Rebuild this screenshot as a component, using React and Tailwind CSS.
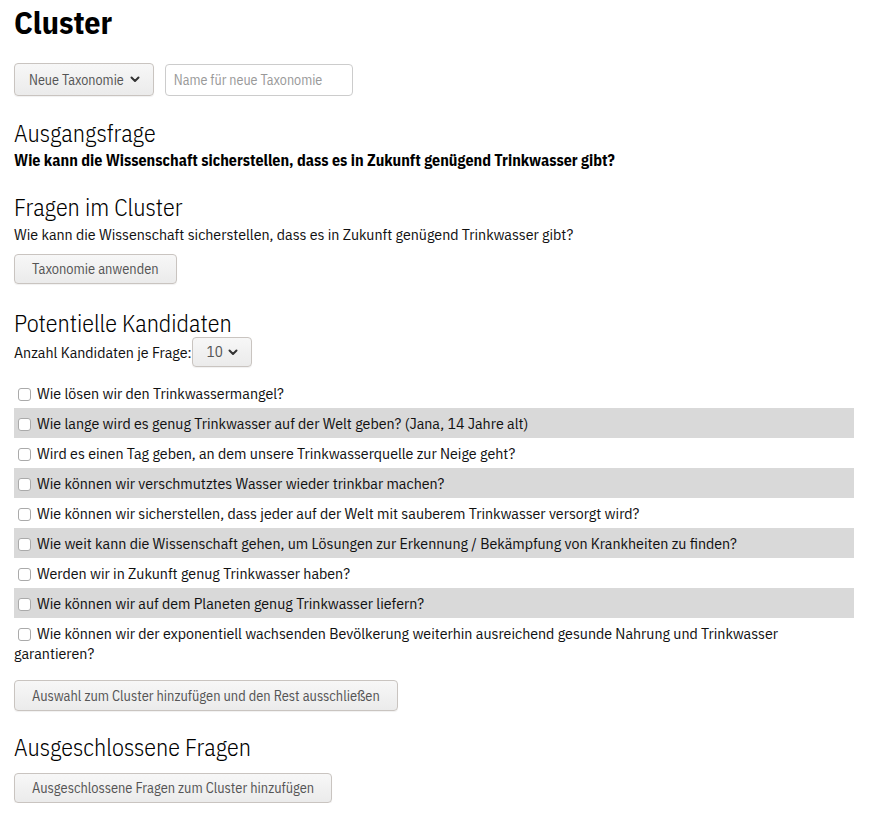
const questions = [
  "Wie lösen wir den Trinkwassermangel?",
  "Wie lange wird es genug Trinkwasser auf der Welt geben? (Jana, 14 Jahre alt)",
  "Wird es einen Tag geben, an dem unsere Trinkwasserquelle zur Neige geht?",
  "Wie können wir verschmutztes Wasser wieder trinkbar machen?",
  "Wie können wir sicherstellen, dass jeder auf der Welt mit sauberem Trinkwasser versorgt wird?",
  "Wie weit kann die Wissenschaft gehen, um Lösungen zur Erkennung / Bekämpfung von Krankheiten zu finden?",
  "Werden wir in Zukunft genug Trinkwasser haben?",
  "Wie können wir auf dem Planeten genug Trinkwasser liefern?",
  "Wie können wir der exponentiell wachsenden Bevölkerung weiterhin ausreichend gesunde Nahrung und Trinkwasser garantieren?",
];

function Chevron() {
  return (
    <svg width="10" height="7" viewBox="0 0 10 7" className="inline-block">
      <polyline points="1.5,1.5 5,5 8.5,1.5" fill="none" stroke="#333" strokeWidth="2" strokeLinecap="round" strokeLinejoin="round" />
    </svg>
  );
}

const btn =
  "inline-flex items-center rounded-[4px] border border-[#c9c4c0] bg-gradient-to-b from-[#f7f7f7] to-[#ebebeb] shadow-[0_1px_1px_rgba(0,0,0,0.06)] text-[#555]";

export default function App() {
  return (
    <div
      className="px-[14px] text-[15.75px] leading-[20px] text-[#111]"
      style={{ fontFamily: "'IBM Plex Sans Condensed', Roboto, sans-serif" }}
    >
      <h1 className="pt-[2px] text-[32px] leading-[40px] font-bold text-black">Cluster</h1>

      <div className="mt-[21px] flex items-center gap-[11px]">
        <button className={btn + " h-[33px] pl-[14px] pr-[13px] gap-[6px] text-[14px] text-[#222]"}>
          <span>Neue Taxonomie</span>
          <Chevron />
        </button>
        <input
          className="h-[32px] w-[188px] rounded-[4px] border border-[#ccc] px-[8px] text-[14px] placeholder:text-[#999] outline-none"
          placeholder="Name für neue Taxonomie"
        />
      </div>

      <h2 className="mt-[23px] text-[24px] leading-[28px] font-light text-black">Ausgangsfrage</h2>
      <p className="mt-[3px] text-[16px] font-bold text-black">
        Wie kann die Wissenschaft sicherstellen, dass es in Zukunft genügend Trinkwasser gibt?
      </p>

      <h2 className="mt-[23px] text-[24px] leading-[28px] font-light text-black">Fragen im Cluster</h2>
      <p className="mt-[3px]">Wie kann die Wissenschaft sicherstellen, dass es in Zukunft genügend Trinkwasser gibt?</p>
      <button className={btn + " mt-[10px] h-[30px] px-[17px] text-[14.3px]"}>Taxonomie anwenden</button>

      <h2 className="mt-[25px] text-[24px] leading-[28px] font-light text-black">Potentielle Kandidaten</h2>
      <div className="flex items-center">
        <span>Anzahl Kandidaten je Frage:</span>
        <button className={btn + " h-[30px] pl-[14px] pr-[13px] gap-[5px] text-[15px] text-[#222]"}>
          <span>10</span>
          <Chevron />
        </button>
      </div>

      <div className="mt-[11px] w-[840px]">
        {questions.map((q, i) => (
          <div key={i} className={"py-[5px] " + (i % 2 === 1 ? "bg-[#d9d9d9]" : "")}>
            <span className="inline-block align-[-2px] ml-[4px] mr-[6px] h-[13px] w-[13px] rounded-[3px] border border-[#aaa] bg-white"></span>
            {q}
          </div>
        ))}
      </div>

      <button className={btn + " mt-[12px] h-[31px] px-[17px] text-[14.3px]"}>
        Auswahl zum Cluster hinzufügen und den Rest ausschließen
      </button>

      <h2 className="mt-[22px] text-[24px] leading-[28px] font-light text-black">Ausgeschlossene Fragen</h2>
      <button className={btn + " mt-[12px] h-[30px] px-[17px] text-[14.3px]"}>Ausgeschlossene Fragen zum Cluster hinzufügen</button>
    </div>
  );
}
